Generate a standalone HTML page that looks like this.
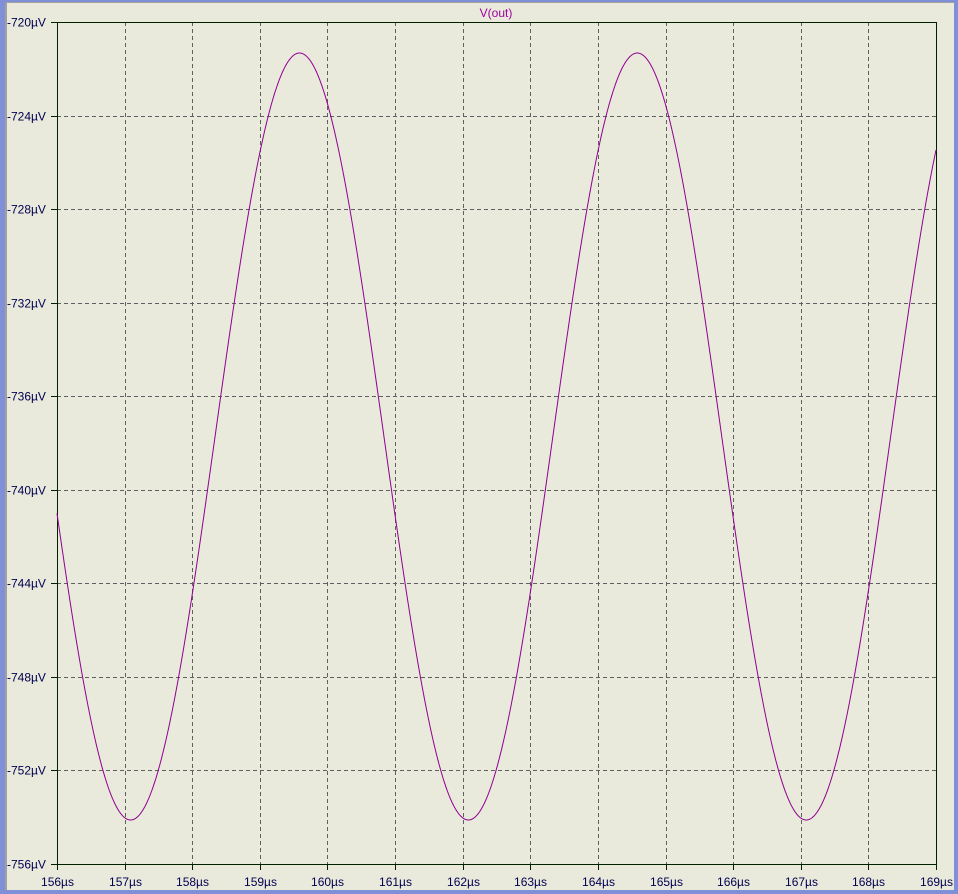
<!DOCTYPE html>
<html><head><meta charset="utf-8"><style>
html,body{margin:0;padding:0;width:958px;height:894px;overflow:hidden;background:#e9e9dc}
svg{display:block}
text{font-family:"Liberation Sans",sans-serif;font-size:12px;fill:#000050}
</style></head><body>
<svg id="s" width="958" height="894" xmlns="http://www.w3.org/2000/svg">
<rect x="0" y="0" width="958" height="894" fill="#e9e9dc"/>
<rect x="0" y="0" width="958" height="2" fill="#7f90d8"/>
<rect x="0" y="0" width="5" height="894" fill="#7f90d8"/>
<rect x="5" y="2" width="2" height="890" fill="#a0a0a0"/>
<rect x="5" y="2" width="950" height="1" fill="#a0a0a0"/>
<rect x="954" y="0" width="4" height="894" fill="#7f90d8"/>
<rect x="0" y="890" width="958" height="4" fill="#7f90d8"/>
<text x="496" y="17" text-anchor="middle" style="fill:#a000a0">V(out)</text>
<g id="g"></g>
<rect x="57.5" y="22.5" width="879" height="842" fill="none" stroke="#002000" stroke-width="1"/>
<path id="w" fill="none" stroke="#900090" stroke-width="1"/>
</svg>
<script>
var g=document.getElementById('g'),h="";
var x0=57,x1=936,y0=22,y1=864;
for(var i=0;i<=13;i++){var x=Math.round(x0+i*(x1-x0)/13)+0.5;
 if(i>0&&i<13)h+='<line x1="'+x+'" y1="'+y0+'" x2="'+x+'" y2="'+y1+'" stroke="#606060" stroke-dasharray="4,3"/>';
 h+='<line x1="'+x+'" y1="'+y1+'" x2="'+x+'" y2="'+(y1+6)+'" stroke="#002000"/>';
 h+='<text x="'+(x)+'" y="886" text-anchor="middle">'+(156+i)+'µs</text>';}
for(var j=0;j<=9;j++){var y=Math.round(y0+j*(y1-y0)/9)+0.5;
 if(j>0&&j<9)h+='<line x1="'+x0+'" y1="'+y+'" x2="'+x1+'" y2="'+y+'" stroke="#606060" stroke-dasharray="4,3"/>';
 h+='<line x1="'+(x0-6)+'" y1="'+y+'" x2="'+x0+'" y2="'+y+'" stroke="#002000"/>';
 h+='<text x="7" y="'+(y+4)+'">-'+(720+4*j)+'µV</text>';}
g.innerHTML=h;
var d="",xp=299.5,P=337.8,A=383.5,ym=436.5;
for(var x=x0;x<=x1;x+=0.5){var y=ym-A*Math.cos(2*Math.PI*(x-xp)/P);d+=(x==x0?"M":"L")+x.toFixed(1)+" "+y.toFixed(1);}
document.getElementById('w').setAttribute('d',d);
</script>
</body></html>
